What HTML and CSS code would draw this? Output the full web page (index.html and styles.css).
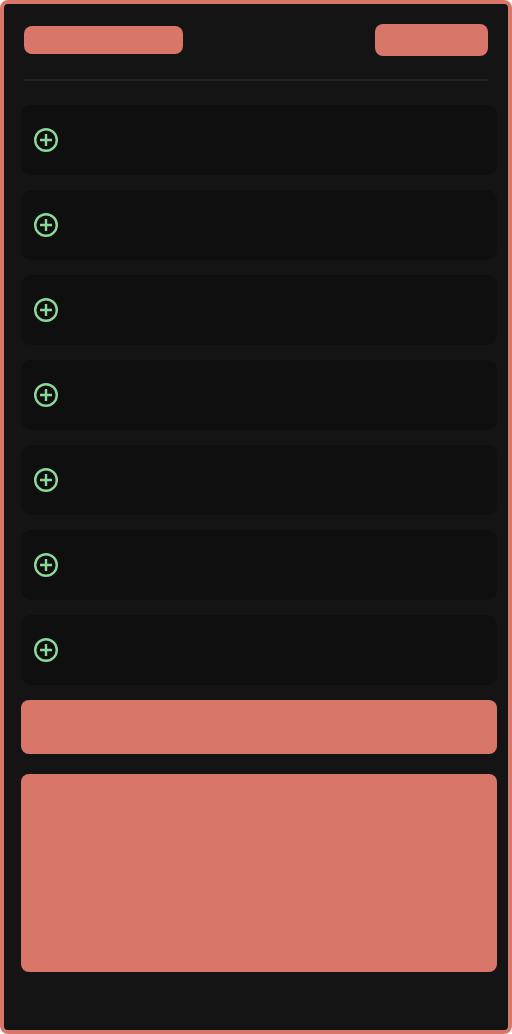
FILE: index.html
```html
<!DOCTYPE html>
<html lang="en">
<head>
<meta charset="utf-8">
<title>Panel</title>
<link rel="stylesheet" href="styles.css">
</head>
<body>
<svg class="defs" width="0" height="0" aria-hidden="true">
  <symbol id="plus" viewBox="0 0 24 24">
    <circle cx="12" cy="12" r="10.8"/>
    <path d="M6 12h12M12 6v12"/>
  </symbol>
</svg>
<main class="panel">
  <header class="header">
    <div class="block title"></div>
    <div class="block action"></div>
  </header>
  <section class="list">
    <div class="card"><svg class="icon"><use href="#plus"/></svg></div>
    <div class="card"><svg class="icon"><use href="#plus"/></svg></div>
    <div class="card"><svg class="icon"><use href="#plus"/></svg></div>
    <div class="card"><svg class="icon"><use href="#plus"/></svg></div>
    <div class="card"><svg class="icon"><use href="#plus"/></svg></div>
    <div class="card"><svg class="icon"><use href="#plus"/></svg></div>
    <div class="card"><svg class="icon"><use href="#plus"/></svg></div>
  </section>
  <section class="footer">
    <div class="block banner"></div>
    <div class="block content"></div>
  </section>
</main>
</body>
</html>
```
FILE: styles.css
```css
* { box-sizing: border-box; }
html { background: #fff; }
body { margin: 0; }
.defs { display: none; }
.panel {
  width: 512px;
  height: 1034px;
  padding: 20px 11px 0 17px;
  border: 4px solid #d8766a;
  border-radius: 8px;
  background: #141414;
}
.block { background: #d8766a; border-radius: 8px; }
.header {
  display: flex;
  justify-content: space-between;
  align-items: center;
  height: 57px;
  margin: 0 9px 24px 3px;
  padding-bottom: 23px;
  border-bottom: 2px solid #222;
}
.title { width: 159px; height: 28px; }
.action { width: 113px; height: 32px; }
.list { display: flex; flex-direction: column; gap: 15px; }
.card {
  display: flex;
  align-items: center;
  height: 70px;
  padding-left: 13px;
  border-radius: 10px;
  background: #0f0f0f;
}
.icon {
  width: 24px;
  height: 24px;
  fill: none;
  stroke: #8bd898;
  stroke-width: 2.4;
}
.footer { display: flex; flex-direction: column; gap: 20px; margin-top: 15px; }
.banner { height: 54px; }
.content { height: 198px; }
```
